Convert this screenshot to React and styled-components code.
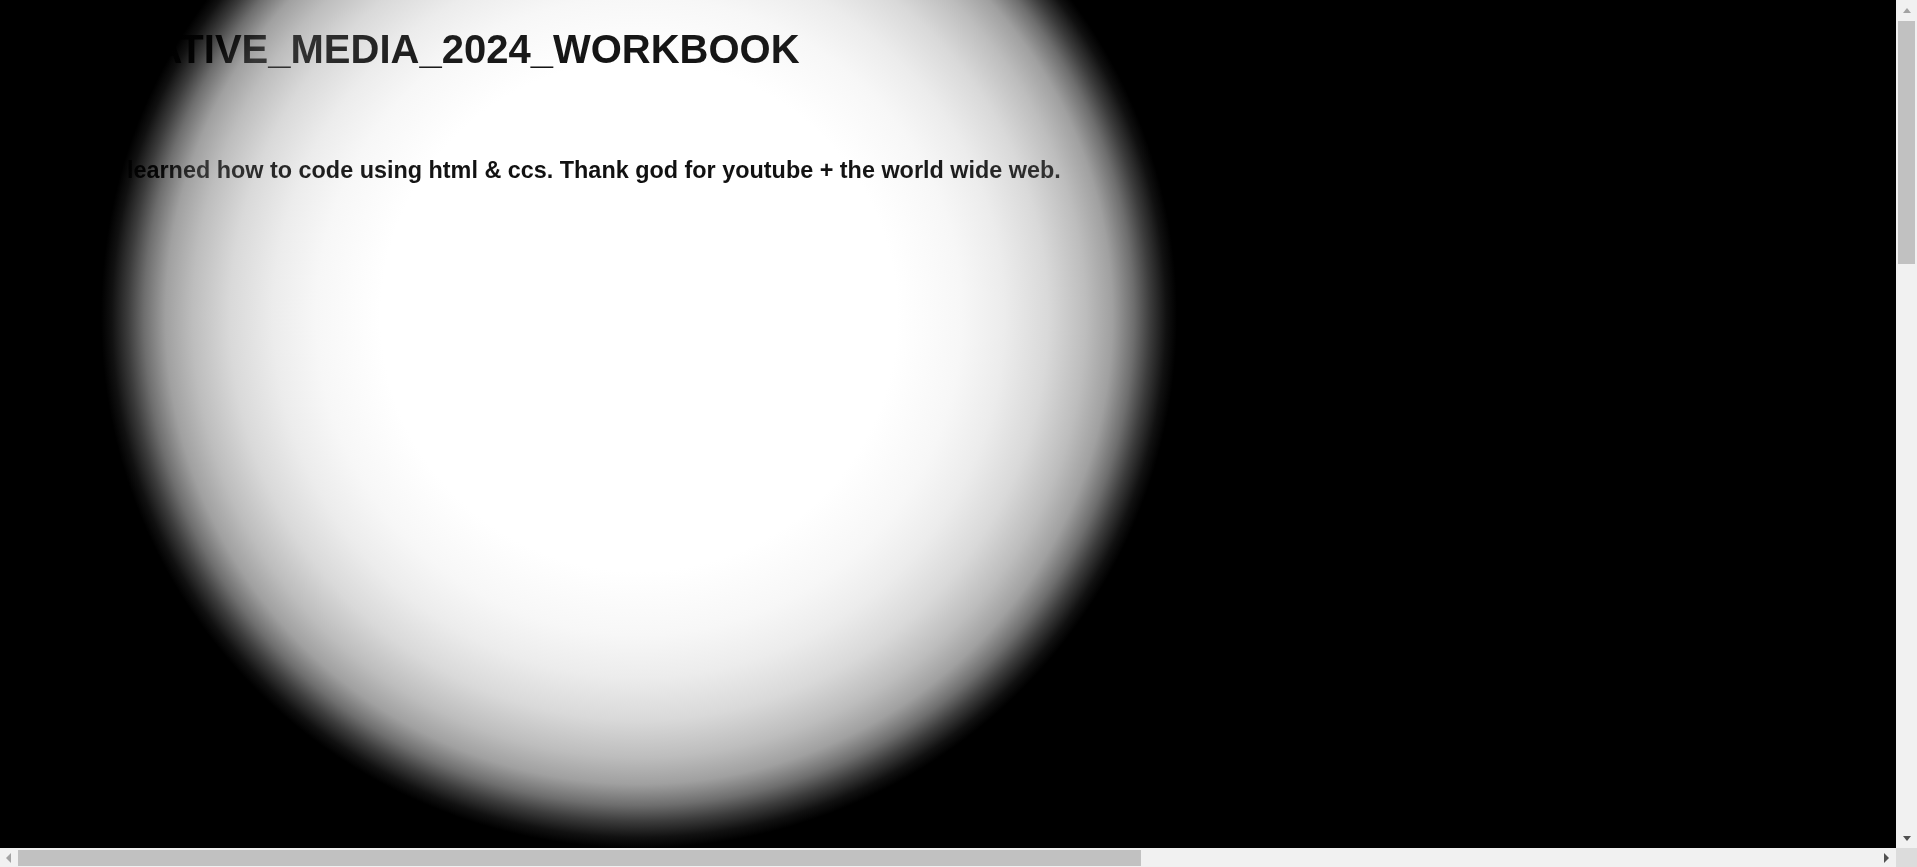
import React from "react";
import styled, { createGlobalStyle, css } from "styled-components";

const GlobalStyle = createGlobalStyle`
  html, body {
    margin: 0;
    padding: 0;
    background: #000;
    overflow: hidden;
  }
  body {
    font-family: "Liberation Sans", Arial, sans-serif;
    font-size: 20px;
  }
`;

const SPOT = "ellipse 538px 532px at 639px 316px";

const Frame = styled.div`
  display: grid;
  grid-template-columns: 1fr 21px;
  grid-template-rows: 1fr 19px;
  width: 100vw;
  height: 100vh;
`;

// the spotlight: a soft white ellipse on a black page
const Stage = styled.main`
  box-sizing: border-box;
  overflow: hidden;
  padding: 27px 0 0 69px;
  background: radial-gradient(
      ${SPOT},
      #fff 0%,
      #fff 48%,
      #f7f7f7 60%,
      #ececec 68%,
      #d9d9d9 76%,
      #bdbdbd 83%,
      #a0a0a0 88%,
      #6e6e6e 92%,
      #3c3c3c 95%,
      #111 98%,
      #000 100%
    ),
    #000;
`;

// text ink fades with the light: near black in the middle, grey in the rim
const ink = css`
  color: transparent;
  background: radial-gradient(
    ${SPOT},
    #0e0e0e 0%,
    #121212 45%,
    #1e1e1e 65%,
    #2e2e2e 78%,
    #363636 86%,
    #1c1c1c 90%,
    #060606 93%,
    #000 100%
  );
  background-attachment: fixed;
  -webkit-background-clip: text;
  background-clip: text;
`;

const Title = styled.h1`
  margin: 0;
  font-size: 40px;
  font-weight: 700;
  line-height: normal;
  ${ink}
`;

const Lead = styled.h3`
  margin: 85px 0 0 ${(p) => p.indent || 0}px;
  font-size: 23.4px;
  font-weight: 700;
  line-height: normal;
  ${ink}
`;

const Bar = styled.div`
  display: flex;
  flex-direction: ${(p) => (p.vertical ? "column" : "row")};
  background: #f1f1f1;
`;

const ArrowBtn = styled.div`
  flex: 0 0 ${(p) => p.size}px;
  display: flex;
  align-items: center;
  justify-content: center;
`;

const Track = styled.div`
  flex: 1;
  display: flex;
  flex-direction: ${(p) => (p.vertical ? "column" : "row")};
`;

const Thumb = styled.div`
  background: #c1c1c1;
  ${(p) =>
    p.vertical
      ? css`
          height: ${p.length}px;
          margin: 0 2px;
        `
      : css`
          width: ${p.length}px;
          margin: 2px 0 1px 1px;
        `}
`;

const Corner = styled.div`
  background: #dcdcdc;
`;

const tri = {
  up: (c) => css`
    border-left: 4.5px solid transparent;
    border-right: 4.5px solid transparent;
    border-bottom: 5px solid ${c};
  `,
  down: (c) => css`
    border-left: 4.5px solid transparent;
    border-right: 4.5px solid transparent;
    border-top: 5px solid ${c};
  `,
  left: (c) => css`
    border-top: 5px solid transparent;
    border-bottom: 5px solid transparent;
    border-right: 5px solid ${c};
  `,
  right: (c) => css`
    border-top: 5px solid transparent;
    border-bottom: 5px solid transparent;
    border-left: 5px solid ${c};
  `,
};

const Arrow = styled.span`
  width: 0;
  height: 0;
  ${(p) => tri[p.dir](p.dim ? "#a3a3a3" : "#505050")}
`;

const App = () => {
  return (
    <>
      <GlobalStyle />
      <Frame>
        <Stage>
          <Title>CREATIVE_MEDIA_2024_WORKBOOK</Title>
          <Lead indent={45}>
            I learned how to code using html &amp; ccs. Thank god for youtube +
            the world wide web.
          </Lead>
        </Stage>
        <Bar vertical>
          <ArrowBtn size={21}>
            <Arrow dir="up" dim />
          </ArrowBtn>
          <Track vertical>
            <Thumb vertical length={243} />
          </Track>
          <ArrowBtn size={20}>
            <Arrow dir="down" />
          </ArrowBtn>
        </Bar>
        <Bar>
          <ArrowBtn size={17}>
            <Arrow dir="left" dim />
          </ArrowBtn>
          <Track>
            <Thumb length={1123} />
          </Track>
          <ArrowBtn size={20}>
            <Arrow dir="right" />
          </ArrowBtn>
        </Bar>
        <Corner />
      </Frame>
    </>
  );
};

export default App;
